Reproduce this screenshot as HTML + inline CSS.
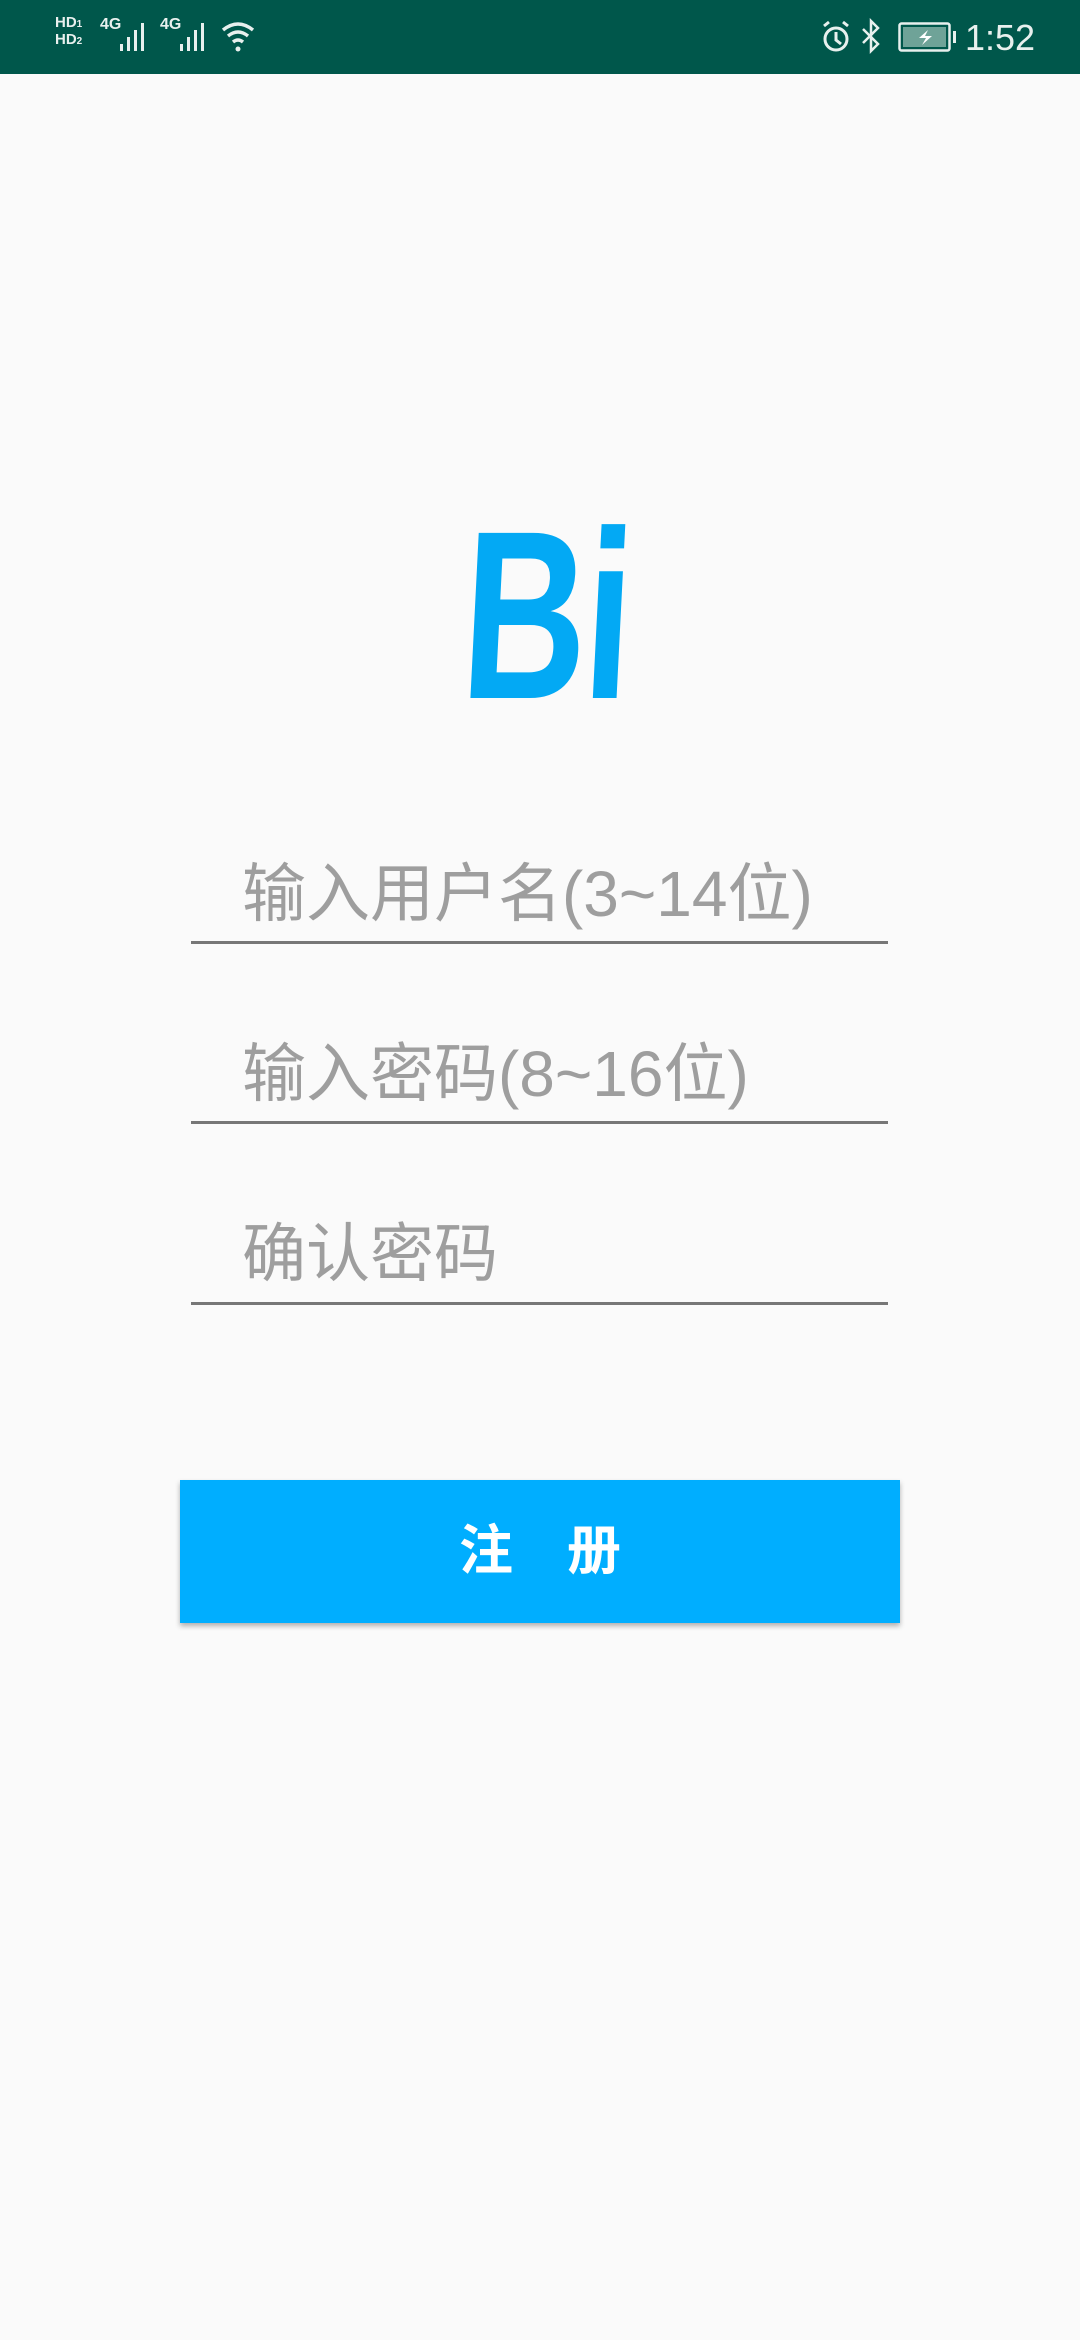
<!DOCTYPE html>
<html><head><meta charset="utf-8"><style>
body{margin:0;width:1080px;height:2340px;background:#fafafa;position:relative;overflow:hidden;font-family:"Liberation Sans","Noto Sans CJK SC",sans-serif}
.sb{position:absolute;left:0;top:0;width:1080px;height:74px;background:#00574b;color:#e8f0ee}
.logo{position:absolute;left:457px;top:495px;font-size:240px;font-weight:bold;color:#03a9f4;transform:scaleX(0.72) skewX(-4deg);transform-origin:left bottom;line-height:1;letter-spacing:-4px}
.in{position:absolute;left:242px;font-size:64px;color:#9e9e9e;line-height:1}
.ul{position:absolute;left:191px;width:697px;height:3px;background:#777}
.btn{position:absolute;left:180px;top:1480px;width:720px;height:143px;background:#00aeff;box-shadow:0 3px 5px rgba(0,0,0,.3);color:#fff;font-size:54px;font-weight:bold;text-align:center;line-height:143px;letter-spacing:0}
</style></head><body>
<div class="sb">
<div style="position:absolute;left:55px;top:14px;font-size:15px;font-weight:bold">HD<span style="font-size:10px">1</span><br>HD<span style="font-size:10px">2</span></div>
<div style="position:absolute;left:100px;top:16px;font-size:16px;font-weight:bold">4G</div>
<svg style="position:absolute;left:118px;top:20px" width="30" height="32"><rect x="2" y="24" width="3" height="7" fill="#e8f0ee"/><rect x="9" y="17" width="3" height="14" fill="#e8f0ee"/><rect x="16" y="10" width="3" height="21" fill="#e8f0ee"/><rect x="23" y="3" width="3" height="28" fill="#e8f0ee"/></svg>
<div style="position:absolute;left:160px;top:16px;font-size:16px;font-weight:bold">4G</div>
<svg style="position:absolute;left:178px;top:20px" width="30" height="32"><rect x="2" y="24" width="3" height="7" fill="#e8f0ee"/><rect x="9" y="17" width="3" height="14" fill="#e8f0ee"/><rect x="16" y="10" width="3" height="21" fill="#e8f0ee"/><rect x="23" y="3" width="3" height="28" fill="#e8f0ee"/></svg>
<svg style="position:absolute;left:220px;top:20px" width="40" height="34" fill="none" stroke="#e8f0ee" stroke-width="3.5"><path d="M3 10 Q18 -2 33 10"/><path d="M8 16 Q18 8 28 16"/><path d="M13 22 Q18 18 23 22"/><circle cx="18" cy="29" r="2.5" fill="#e8f0ee" stroke="none"/></svg>
<svg style="position:absolute;left:820px;top:20px" width="32" height="34" fill="none" stroke="#e8f0ee" stroke-width="3"><circle cx="16" cy="19" r="11"/><path d="M16 12v8l5 4M4 6l5-4M28 6l-5-4"/></svg>
<svg style="position:absolute;left:860px;top:18px" width="22" height="38" fill="none" stroke="#e8f0ee" stroke-width="2.5"><path d="M3 11l15 15-7 7V3l7 7L3 25"/></svg>
<svg style="position:absolute;left:898px;top:22px" width="60" height="32"><rect x="1.5" y="1.5" width="50" height="27" rx="2" fill="none" stroke="#e8f0ee" stroke-width="2.5"/><rect x="5" y="5" width="43" height="20" fill="#6fa398"/><rect x="55" y="9" width="3" height="12" fill="#e8f0ee"/><path d="M30 8l-9 8h7l-4 7 10-9h-7z" fill="#fff"/></svg>
<div style="position:absolute;left:965px;top:17px;font-size:36px">1:52</div>
</div>
<div class="logo">Bi</div>
<div class="in" style="top:862px">输入用户名(3~14位)</div>
<div class="ul" style="top:941px"></div>
<div class="in" style="top:1042px">输入密码(8~16位)</div>
<div class="ul" style="top:1121px"></div>
<div class="in" style="top:1222px">确认密码</div>
<div class="ul" style="top:1302px"></div>
<div class="btn">注&emsp;册</div>
</body></html>
